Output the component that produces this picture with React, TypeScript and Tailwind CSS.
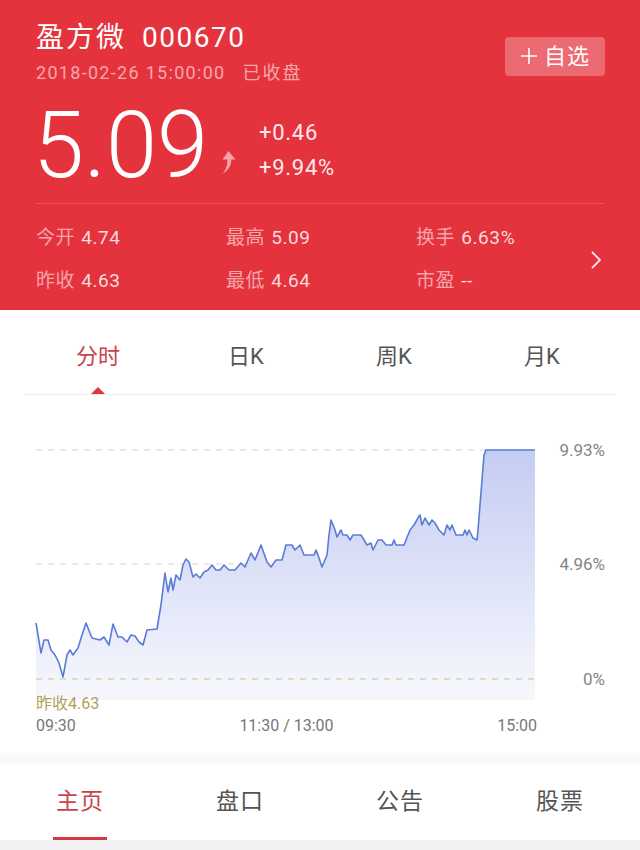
import React from 'react';

const font = "font-['Roboto','Noto_Sans_CJK_SC',sans-serif]";

// intraday points (x, y) in page pixels
const points: [number, number][] = [
  [36, 623], [41, 653], [44, 640], [48, 640], [51, 650], [55, 655], [59, 663], [63, 677], [67, 655], [70, 650],
  [73, 655], [78, 648], [82, 635], [86, 623], [92, 638], [100, 640], [104, 637], [109, 645], [113, 624], [118, 637],
  [122, 637], [127, 642], [131, 635], [135, 636], [139, 642], [143, 645], [147, 630], [157, 629], [161, 605], [165, 573],
  [168, 592], [171, 578], [173, 590], [176, 575], [180, 580], [183, 565], [186, 559], [189, 562], [193, 577], [196, 574],
  [200, 578], [204, 572], [208, 570], [212, 565], [216, 570], [220, 570], [224, 565], [229, 570], [235, 570], [241, 563],
  [245, 567], [251, 553], [255, 560], [261, 545], [267, 562], [271, 567], [276, 560], [282, 560], [286, 545], [292, 545],
  [295, 550], [300, 545], [304, 555], [314, 555], [316, 550], [319, 558], [322, 567], [327, 555], [329, 535], [331, 520],
  [335, 530], [337, 537], [341, 530], [343, 535], [347, 535], [350, 540], [353, 535], [361, 535], [364, 540], [367, 545],
  [371, 543], [373, 550], [378, 540], [382, 540], [386, 545], [392, 545], [394, 540], [396, 545], [404, 545], [410, 530],
  [414, 525], [418, 518], [420, 515], [422, 525], [425, 518], [429, 525], [432, 520], [435, 523], [439, 530], [444, 535],
  [447, 525], [450, 530], [452, 525], [456, 535], [463, 535], [465, 530], [467, 535], [469, 530], [473, 538], [477, 540],
  [478, 530], [484, 455], [486, 450], [535, 450],
];

const line = points.map(([x, y], i) => `${i ? 'L' : 'M'}${x} ${y}`).join(' ');
const area = `${line} L535 699 L36 699 Z`;

const Stat = ({ label, value }: { label: string; value: string }) => (
  <div className="leading-[43px] text-[19px] tracking-[0.6px]">
    <span className="text-[#f6a5ab]">{label}</span>
    <span className="ml-[6px] text-[#fcdadd]">{value}</span>
  </div>
);

const Header = () => (
  <div className="bg-[#e4333d] h-[310px] px-9 pt-[20px] text-white">
    <div className="flex justify-between items-start">
      <div>
        <div className="h-[36px] leading-[36px] text-[28px]">
          <span className="tracking-[2px]">盈方微</span>
          <span className="ml-[16px] tracking-[1.5px]">000670</span>
        </div>
        <div className="mt-[6px] leading-[22px] text-[18px] text-[#f7a7ac]">
          <span className="tracking-[1.3px]">2018-02-26 15:00:00</span>
          <span className="ml-[17px] tracking-[2px]">已收盘</span>
        </div>
      </div>
      <button className="mt-[17px] mr-[-1px] w-[100px] h-[39px] rounded-[4px] bg-[#ec6a71] flex items-center justify-center gap-[6px] text-[22px] tracking-[1px]">
        <svg width="18" height="18" viewBox="0 0 18 18" className="mb-[1px]">
          <path d="M9 1V17M1 9H17" stroke="#fff" strokeWidth="1.6" />
        </svg>
        <span>自选</span>
      </button>
    </div>

    <div className="mt-[16px] flex items-start h-[91px]">
      <div className="text-[92px] leading-[91px] font-light ml-[-3px]">5.09</div>
      <svg width="18" height="25" viewBox="0 0 18 25" className="ml-[11px] mt-[50px]">
        <path d="M9.5 1 L16.5 9.5 L12.3 9.5 C12.3 15.5 9.5 20 3.5 24 C7.5 19 8.6 14.5 8.2 9.5 L3.5 9.5 Z" fill="#f7a0a6" />
      </svg>
      <div className="ml-[22px] mt-[15px] text-[22px] leading-[35px] tracking-[0.7px] text-[#fde9ea]">
        <div>+0.46</div>
        <div>+9.94%</div>
      </div>
    </div>

    <div className="mt-[12px] h-px bg-[#ea555e]" />

    <div className="mt-[12px] flex items-center">
      <div className="grid grid-cols-[190px_190px_1fr] flex-1">
        <Stat label="今开" value="4.74" />
        <Stat label="最高" value="5.09" />
        <Stat label="换手" value="6.63%" />
        <Stat label="昨收" value="4.63" />
        <Stat label="最低" value="4.64" />
        <Stat label="市盈" value="--" />
      </div>
      <svg width="14" height="22" viewBox="0 0 14 22" className="mr-[1px] mt-[2px]">
        <path d="M3 3 L11 11 L3 19" fill="none" stroke="#fbe3e5" strokeWidth="1.8" />
      </svg>
    </div>
  </div>
);

const PeriodTabs = () => {
  const tabs = ['分时', '日K', '周K', '月K'];
  return (
    <div className="mx-6 h-[85px] grid grid-cols-4 border-b border-[#ececee]">
      {tabs.map((t, i) => (
        <div key={t} className="flex flex-col items-center">
          <div className={`pt-[32px] leading-[30px] text-[22px] ${i === 0 ? 'text-[#c9434c]' : 'text-[#555]'}`}>{t}</div>
          {i === 0 && (
            <div className="mt-auto w-0 h-0 border-l-[7px] border-r-[7px] border-b-[7px] border-l-transparent border-r-transparent border-b-[#e2353f]" />
          )}
        </div>
      ))}
    </div>
  );
};

const Chart = () => (
  <div className="relative h-[358px] bg-white">
    <svg width="640" height="358" viewBox="0 395 640 358" className="absolute inset-0">
      <defs>
        <linearGradient id="fill" x1="0" y1="450" x2="0" y2="699" gradientUnits="userSpaceOnUse">
          <stop offset="0" stopColor="#c4ccf2" />
          <stop offset="1" stopColor="#f7f8fd" />
        </linearGradient>
      </defs>
      <line x1="36" y1="450" x2="535" y2="450" stroke="#e2e2e2" strokeWidth="1.5" strokeDasharray="6 6" />
      <line x1="36" y1="564" x2="535" y2="564" stroke="#e2e2e2" strokeWidth="1.5" strokeDasharray="6 6" />
      <path d={area} fill="url(#fill)" />
      <line x1="36" y1="679" x2="535" y2="679" stroke="#dcd2b2" strokeWidth="1.5" strokeDasharray="6 6" />
      <line x1="36" y1="699" x2="535" y2="699" stroke="#efefef" strokeWidth="1" />
      <path d={line} fill="none" stroke="#5b7cd6" strokeWidth="1.6" strokeLinejoin="round" />
    </svg>
    <div className="absolute right-[35px] top-[45px] leading-[20px] text-[17px] text-[#858585]">9.93%</div>
    <div className="absolute right-[35px] top-[159px] leading-[20px] text-[17px] text-[#858585]">4.96%</div>
    <div className="absolute right-[35px] top-[274px] leading-[20px] text-[17px] text-[#858585]">0%</div>
    <div className="absolute left-[36px] top-[299px] leading-[20px] text-[16px] text-[#b69d5c]">昨收4.63</div>
    <div className="absolute left-[36px] right-[103px] top-[321px] leading-[20px] text-[16px] text-[#777] flex justify-between">
      <span>09:30</span>
      <span>11:30 / 13:00</span>
      <span>15:00</span>
    </div>
  </div>
);

const BottomTabs = () => {
  const tabs = ['主页', '盘口', '公告', '股票'];
  return (
    <div className="h-[76px] grid grid-cols-4 bg-white">
      {tabs.map((t, i) => (
        <div key={t} className="flex flex-col items-center">
          <div className={`pt-[24px] leading-[28px] text-[23px] tracking-[1px] ${i === 0 ? 'text-[#c9434c]' : 'text-[#555]'}`}>{t}</div>
          {i === 0 && <div className="mt-auto w-[54px] h-[3px] bg-[#d23a44]" />}
        </div>
      ))}
    </div>
  );
};

const App: React.FC = () => {
  return (
    <div className={`w-[640px] h-[850px] overflow-hidden bg-white ${font}`}>
      <Header />
      <PeriodTabs />
      <Chart />
      <div className="h-[11px] bg-[#fafafb]" />
      <BottomTabs />
      <div className="h-[10px] bg-[#f2f2f4]" />
    </div>
  );
};

export default App;
